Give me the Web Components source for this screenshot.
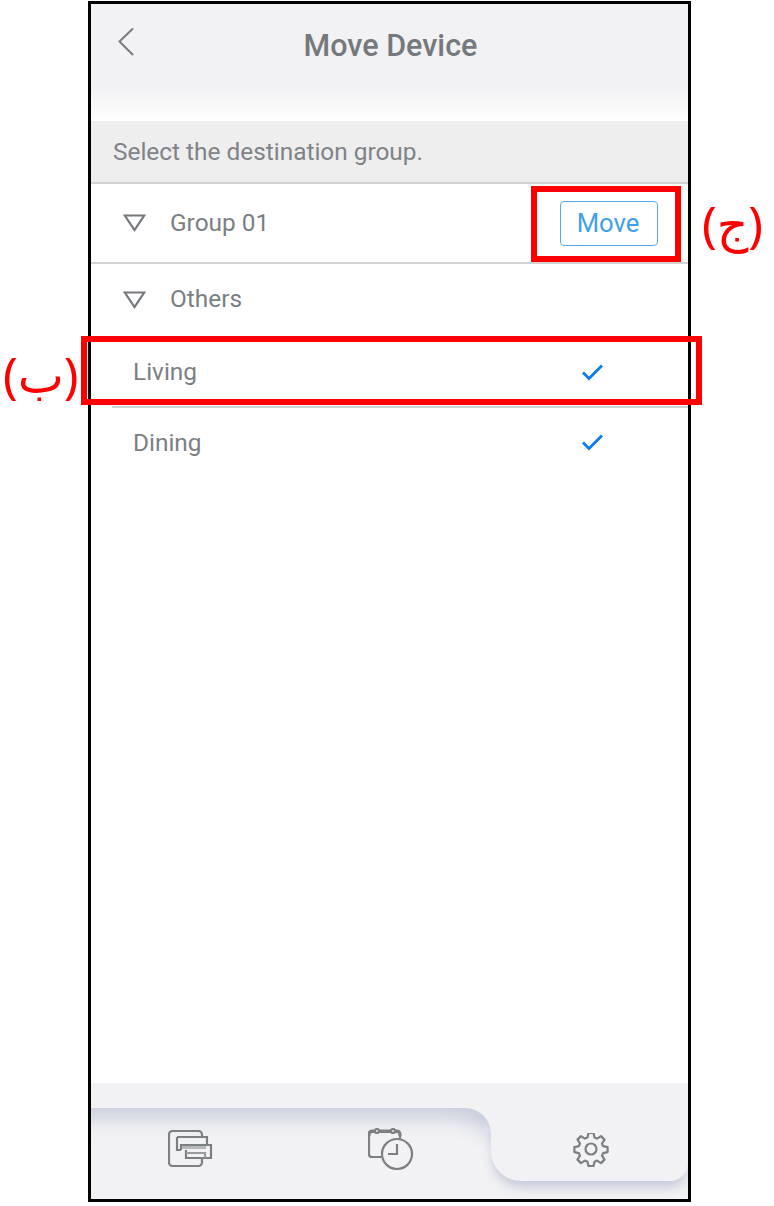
<!DOCTYPE html>
<html><head><meta charset="utf-8">
<style>
html,body{margin:0;padding:0;background:#fff}
body{position:relative;width:774px;height:1206px;overflow:hidden;font-family:Roboto,"Liberation Sans",sans-serif;color:#7b7f83}
</style></head><body>
<phone-frame>
  <app-header slot="top" title="Move Device"></app-header>
  <hint-bar slot="top">Select the destination group.</hint-bar>
  <group-row label="Group 01" action="Move" line></group-row>
  <group-row label="Others"></group-row>
  <room-row label="Living" line></room-row>
  <room-row label="Dining"></room-row>
  <tab-bar slot="bottom"></tab-bar>
</phone-frame>
<note-box style="left:531px;top:186px;width:150px;height:76px"></note-box>
<note-box style="left:81px;top:336px;width:621px;height:69px"></note-box>
<note-label style="left:702px;top:199px">(ج)</note-label>
<note-label style="left:3px;top:350px">(ب)</note-label>
<script>
function def(name, html){
  customElements.define(name, class extends HTMLElement{
    connectedCallback(){
      if(this.shadowRoot) return;
      const s=this.attachShadow({mode:'open'});
      s.innerHTML=typeof html==='function'?html(this):html;
    }
  });
}
def('phone-frame',`<style>
:host{display:flex;flex-direction:column;box-sizing:border-box;width:603px;height:1201px;margin:1px 0 0 88px;border:3px solid #000;background:#fff}
main{flex:1;display:block}
</style><slot name="top"></slot><main><slot></slot></main><slot name="bottom"></slot>`);
def('app-header',el=>`<style>
:host{display:block;height:117px;background:linear-gradient(#f2f2f4 0,#f2f2f4 82px,#fbfbfc 108px,#fff 117px)}
.bar{display:grid;grid-template-columns:70px 1fr 70px;height:84px;align-items:center}
svg{display:block;margin:-8px 0 0 25px}
h1{margin:0;padding-left:2px;font:500 30.5px/1 Roboto,sans-serif;color:#75797d;text-align:center}
</style><div class="bar"><svg width="20" height="32" viewBox="0 0 20 32"><path d="M17 2.500 3.500 15.500 17 29" fill="none" stroke="#777b7f" stroke-width="2"/></svg><h1>${el.getAttribute('title')}</h1><span></span></div>`);
def('hint-bar',`<style>
:host{display:flex;align-items:center;box-sizing:border-box;height:63px;padding:1px 0 0 22px;background:#eee;border-bottom:2px solid #d2d2d2;font:24.4px/1 Roboto,sans-serif;color:#7f8387}
</style><slot></slot>`);
def('group-row',el=>`<style>
:host{display:flex;align-items:center;box-sizing:border-box;height:${el.hasAttribute('line')?'80px':'74px'};padding:0 30px ${el.hasAttribute('line')?'0':'3px'} 32px;font:24.4px/1 Roboto,sans-serif;color:#7b7f83;${el.hasAttribute('line')?'border-bottom:2px solid #d2d2d2;':''}}
svg{display:block;margin-right:24px}
span{flex:1}
button{box-sizing:border-box;width:98px;height:45px;margin:0;padding:1px 2px 0 0;background:#fff;border:1px solid #5aa9ec;border-radius:4px;font:25.6px/1 Roboto,sans-serif;color:#3f9fef}
</style><svg width="23" height="18" viewBox="0 0 23 18"><path d="M1.800 1.500h19.400L11.500 16z" fill="none" stroke="#75797d" stroke-width="2.200"/></svg><span>${el.getAttribute('label')}</span>${el.getAttribute('action')?`<button>${el.getAttribute('action')}</button>`:''}`);
def('room-row',el=>`<style>
:host{display:block;padding-left:21px}
div{display:flex;align-items:center;justify-content:space-between;box-sizing:border-box;height:70px;padding:0 85px 0 21px;font:24.4px/1 Roboto,sans-serif;color:#7b7f83;${el.hasAttribute('line')?'border-bottom:2px solid #d2d2d2;':''}}
svg{display:block;${el.hasAttribute('line')?'':'margin-top:-2px;'}}
</style><div><span>${el.getAttribute('label')}</span><svg width="22" height="18" viewBox="0 0 22 18"><path d="M2 9.500 8 15.500 21 2.500" fill="none" stroke="#0a7cf0" stroke-width="2.800"/></svg></div>`);
def('tab-bar',`<style>
:host{display:grid;grid-template-columns:400px 1fr;height:116px;background:#f2f2f4;overflow:hidden}
.left{position:relative;margin-top:25px;display:grid;grid-template-columns:199px 201px;border-top-right-radius:26px;box-shadow:inset -12px 20px 22px -10px #c8ccdb;background:#f2f2f4}
.left::after{content:"";position:absolute;left:0;right:0;top:12px;bottom:0;background:linear-gradient(rgba(242,242,244,0),#f2f2f4 32px)}
.right{height:98px;display:flex;align-items:center;justify-content:center;box-sizing:border-box;padding:33px 0 0 2px;background:#f2f2f4;border-radius:0 0 18px 30px;box-shadow:0 8px 12px -2px #c3c8d8;clip-path:inset(50px -30px -30px -30px)}
.c{position:relative;z-index:1;display:flex;align-items:center;justify-content:center;padding-bottom:10px}
svg{display:block;fill:none;stroke:#7d8083;stroke-width:2.200}
</style>
<div class="left">
<div class="c"><svg width="45" height="37" viewBox="0 0 45 37"><path d="M34 7V4.500A3.500 3.500 0 0 0 30.500 1H4.500A3.500 3.500 0 0 0 1 4.500v28A3.500 3.500 0 0 0 4.500 36h26a3.500 3.500 0 0 0 3.500-3.500V29"/><path d="M9 7h30v8M9 7v13h4M13 20v-5h30v13H18v-8"/><path d="M18 23h19v5" stroke="#9a9c9f"/><path d="M14 17.500h24" stroke="#b5b7ba" stroke-width="3"/></svg></div>
<div class="c"><svg width="46" height="42" viewBox="0 0 46 42"><path d="M15 29H4a3 3 0 0 1-3-3V7a3 3 0 0 1 3-3h25a3 3 0 0 1 3 3v4"/><path d="M1 8V6a3 3 0 0 1 3-3h25a3 3 0 0 1 3 3v2" stroke-width="3"/><circle cx="9" cy="3" r="2" fill="#f2f2f4"/><circle cx="25" cy="3" r="2" fill="#f2f2f4"/><circle cx="29" cy="26" r="15" fill="#f2f2f4"/><path d="M29 16v10H20"/></svg></div>
</div>
<div class="right"><svg width="36" height="36" viewBox="0 0 36 36"><path d="M15.500 2h5l1 4.500 2.600 1.100 3.900-2.500 3.500 3.500-2.500 3.900 1.100 2.600 4.500 1v5l-4.500 1-1.100 2.600 2.500 3.900-3.500 3.500-3.900-2.500-2.600 1.100-1 4.500h-5l-1-4.500-2.600-1.100-3.900 2.500-3.500-3.500 2.500-3.900-1.100-2.600-4.500-1v-5l4.500-1 1.100-2.600-2.500-3.900 3.500-3.500 3.900 2.500 2.600-1.100z" stroke-linejoin="round"/><circle cx="18" cy="18" r="5.500"/></svg></div>`);
def('note-box',`<style>:host{position:absolute;box-sizing:border-box;border:6px solid #f00;display:block}</style>`);
def('note-label',`<style>:host{position:absolute;display:block;font:49px/1 "Noto Sans","DejaVu Sans",sans-serif;color:#f00;white-space:nowrap}</style><slot></slot>`);
</script>
</body></html>
